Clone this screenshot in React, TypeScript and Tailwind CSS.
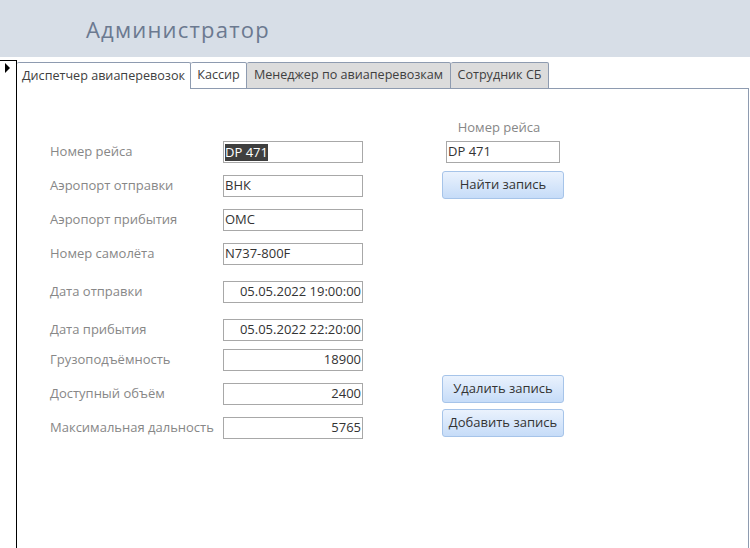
import React from 'react';

const rows: { label: string; value: string; right?: boolean; selected?: boolean; mt: string }[] = [
  { label: 'Номер рейса', value: 'DP 471', selected: true, mt: 'mt-0' },
  { label: 'Аэропорт отправки', value: 'ВНК', mt: 'mt-[12px]' },
  { label: 'Аэропорт прибытия', value: 'OMC', mt: 'mt-[12px]' },
  { label: 'Номер самолёта', value: 'N737-800F', mt: 'mt-[12px]' },
  { label: 'Дата отправки', value: '05.05.2022 19:00:00', right: true, mt: 'mt-[16px]' },
  { label: 'Дата прибытия', value: '05.05.2022 22:20:00', right: true, mt: 'mt-[16px]' },
  { label: 'Грузоподъёмность', value: '18900', right: true, mt: 'mt-[8px]' },
  { label: 'Доступный объём', value: '2400', right: true, mt: 'mt-[12px]' },
  { label: 'Максимальная дальность', value: '5765', right: true, mt: 'mt-[12px]' },
];

const tabs = [
  { name: 'Диспетчер авиаперевозок', w: 'w-[174px]', active: true },
  { name: 'Кассир', w: 'w-[56px]', white: true },
  { name: 'Менеджер по авиаперевозкам', w: 'w-[204px]' },
  { name: 'Сотрудник СБ', w: 'w-[98px]' },
];

const Btn = ({ children, mt }: { children: React.ReactNode; mt: string }) => (
  <div
    className={`${mt} w-[122px] h-[28px] flex items-center justify-center rounded-[3px] border border-[#a6c4e9] bg-gradient-to-b from-[#eaf2fd] to-[#c6dcf8] text-[13px] text-[#333]`}
  >
    {children}
  </div>
);

export default function App() {
  return (
    <div className="w-[750px] h-[548px] bg-white overflow-hidden flex flex-col font-['Open_Sans',sans-serif]">
      {/* header */}
      <div className="h-[57px] bg-[#d7dee7] pl-[86px] flex items-center shrink-0">
        <span className="text-[22px] tracking-[1.2px] text-[#6b7990] leading-none">Администратор</span>
      </div>

      <div className="flex flex-1 min-h-0">
        {/* record selector */}
        <div className="w-[17px] mt-[3px] border-t border-r border-black shrink-0 pt-[2px] pl-[5px]">
          <div className="w-0 h-0 border-y-[5px] border-y-transparent border-l-[5px] border-l-black" />
        </div>

        <div className="flex flex-col flex-1 mt-[5px] min-w-0">
          {/* tabs */}
          <div className="flex h-[27px] shrink-0">
            {tabs.map((t) => (
              <div
                key={t.name}
                className={`${t.w} h-full flex items-center justify-center text-[12.6px] text-[#404040] rounded-t-[2px] border-t border-r border-[#8e9bb0] ${
                  t.active ? 'bg-white' : t.white ? 'bg-white border-b' : 'bg-[#dcdcdc] border-b'
                }`}
              >
                {t.name}
              </div>
            ))}
            <div className="flex-1 border-b border-[#8e9bb0] mr-[1px]" />
          </div>

          {/* panel */}
          <div className="flex-1 border-r border-[#8e9bb0] mr-[1px] flex">
            <div className="pl-[33px] pt-[52px] flex flex-col">
              {rows.map((r) => (
                <div key={r.label} className={`${r.mt} flex items-center`}>
                  <div className="w-[173px] text-[13px] text-[#878787] -mt-[1px]">{r.label}</div>
                  <div
                    className={`w-[140px] h-[22px] border border-[#a8a8a8] flex items-center text-[13px] text-[#333] px-[1px] ${
                      r.right ? 'justify-end' : ''
                    }`}
                  >
                    {r.selected ? <span className="bg-[#3f3f3f] text-white leading-[17px]">{r.value}</span> : r.value}
                  </div>
                </div>
              ))}
            </div>

            <div className="ml-[79px] pt-[29px] flex flex-col w-[122px]">
              <div className="text-[13px] text-[#878787] text-center h-[18px] leading-[18px] -ml-[8px]">Номер рейса</div>
              <div className="mt-[5px] ml-[4px] w-[114px] h-[22px] border border-[#a8a8a8] flex items-center text-[13px] text-[#333] px-[1px]">
                DP 471
              </div>
              <Btn mt="mt-[8px]">Найти запись</Btn>
              <Btn mt="mt-[176px]">Удалить запись</Btn>
              <Btn mt="mt-[6px]">Добавить запись</Btn>
            </div>
          </div>
        </div>
      </div>
    </div>
  );
}
